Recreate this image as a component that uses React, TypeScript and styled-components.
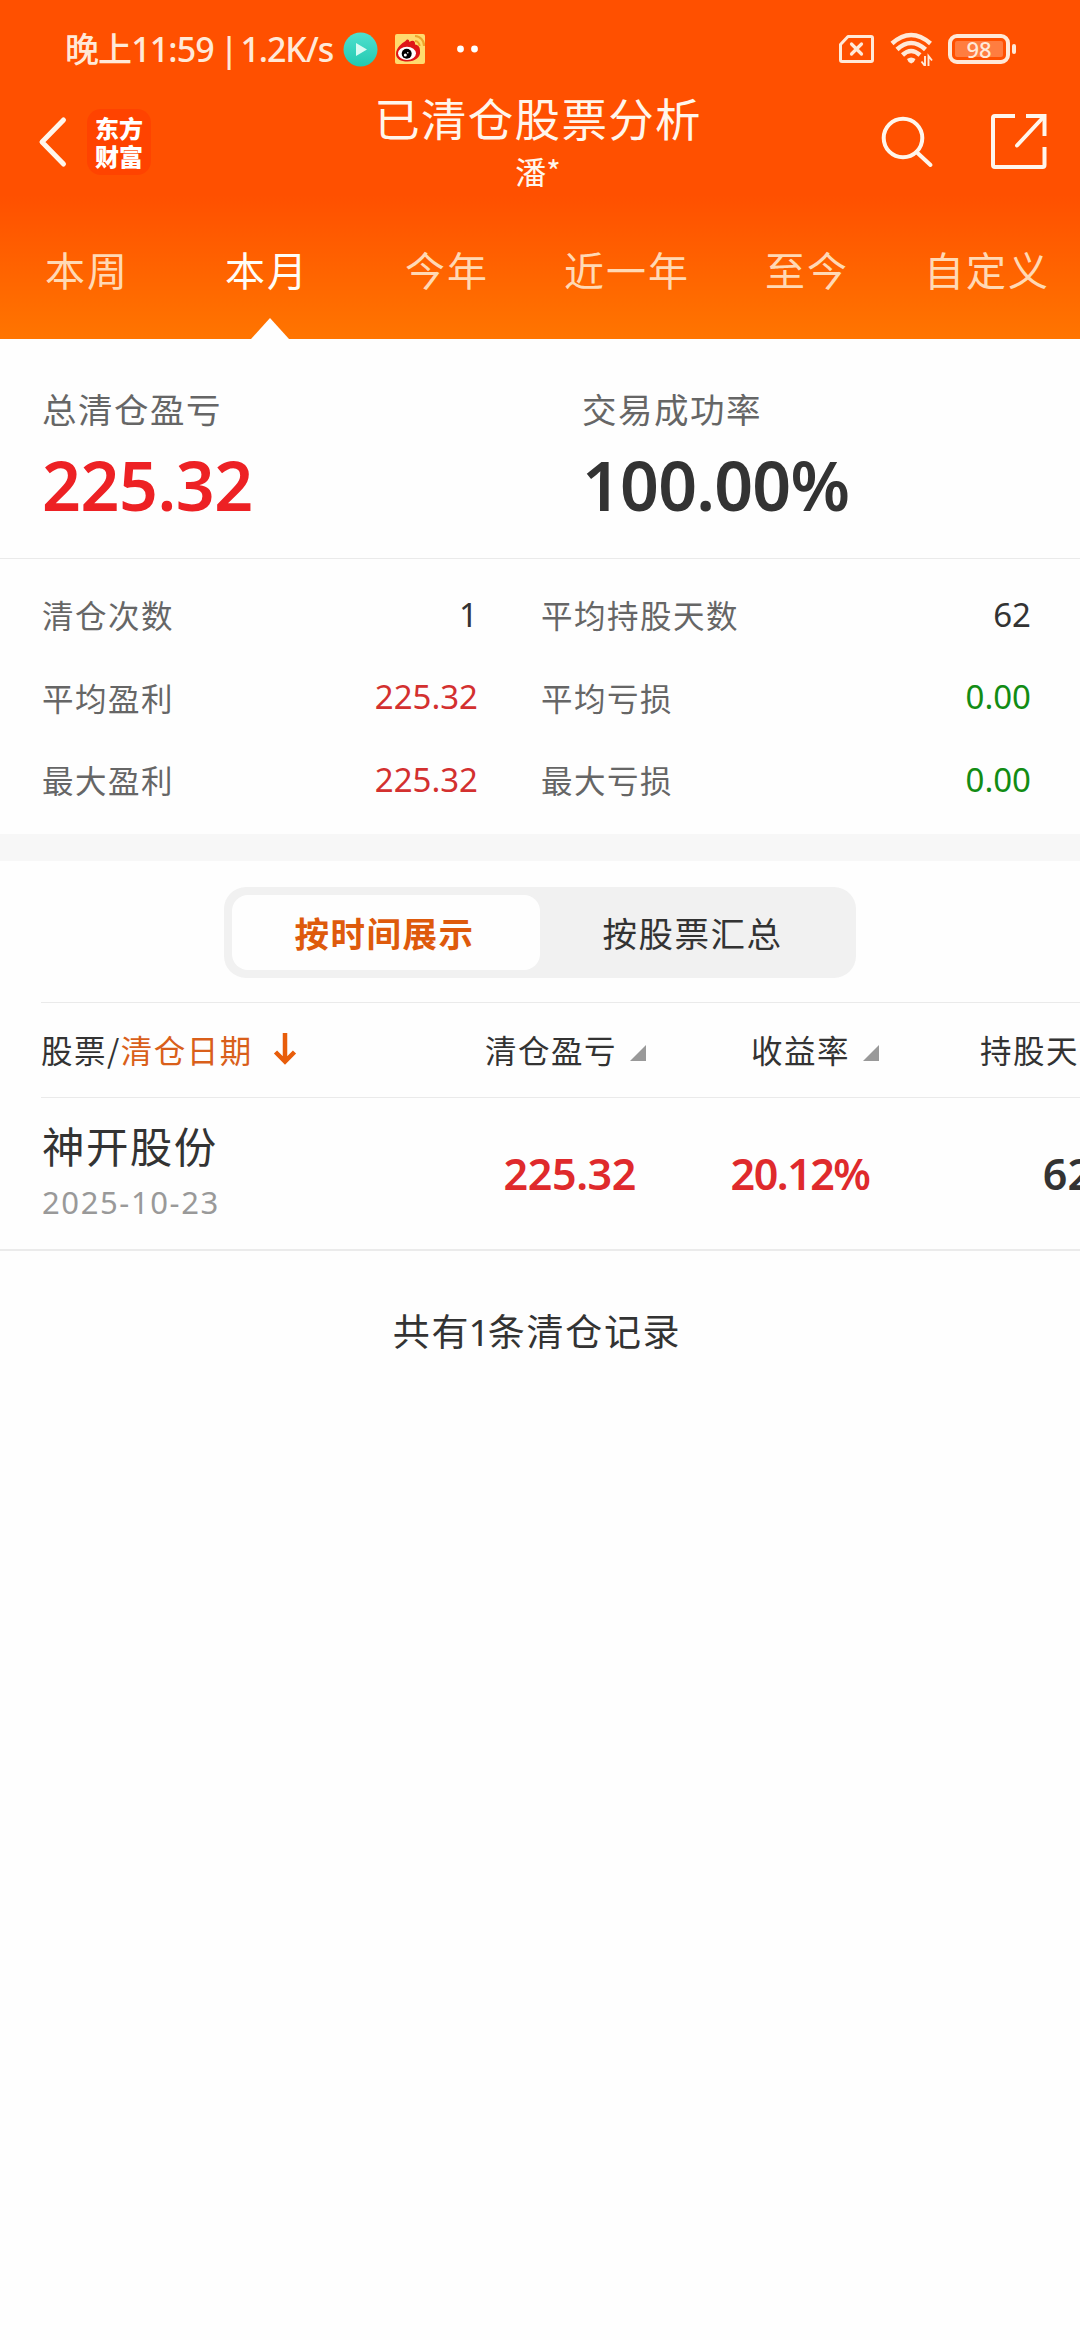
import React from "react";
import styled, { createGlobalStyle } from "styled-components";

const GlobalStyle = createGlobalStyle`
  html, body { margin: 0; padding: 0; background: #fefefe; }
  * { box-sizing: border-box; }
`;

const cjk = `"Noto Sans CJK SC", sans-serif`;
const latin = `"Noto Sans", "Noto Sans CJK SC", sans-serif`;

const Screen = styled.div`
  width: 1080px;
  height: 2340px;
  overflow: hidden;
  background: #fefefe;
  color: #333;
  font-family: ${cjk};
`;

const Header = styled.header`
  height: 339px;
  color: #fff6ec;
  background: linear-gradient(#ff5000 0, #ff5000 195px, #ff7500 339px);
`;

const StatusBar = styled.div`
  height: 88px;
  padding: 10px 64px 0 65px;
  display: flex;
  justify-content: space-between;
  align-items: center;
  color: #ffe9d8;
`;

const StatusGroup = styled.div`
  display: flex;
  align-items: center;
`;

const StatusText = styled.span<{ $gap?: number; $spacing?: number }>`
  font: 500 34px/40px ${latin};
  letter-spacing: ${(p) => p.$spacing ?? 0}px;
  margin-right: ${(p) => p.$gap ?? 0}px;
  white-space: pre;
`;

const StatusIcon = styled.svg<{ $gap?: number }>`
  display: block;
  margin-right: ${(p) => p.$gap ?? 0}px;
`;

const Battery = styled.div`
  width: 62px;
  height: 30px;
  border: 4px solid #ffe9d8;
  border-radius: 9px;
  padding: 3px;
`;

const BatteryLevel = styled.div`
  height: 16px;
  border-radius: 2px;
  background: #ff7d40;
  color: #ffe9d8;
  font: 500 22px/16px ${latin};
  text-align: center;
`;

const BatteryTip = styled.div`
  width: 4px;
  height: 10px;
  margin-left: 2px;
  border-radius: 2px;
  background: #ffe9d8;
`;

const TitleBar = styled.div`
  height: 103px;
  display: grid;
  grid-template-columns: 1fr auto 1fr;
  align-items: center;
`;

const TitleLeft = styled.div`
  display: flex;
  align-items: center;
  padding-left: 37px;
`;

const Logo = styled.div`
  width: 64px;
  height: 66px;
  margin-left: 19px;
  display: flex;
  flex-direction: column;
  align-items: center;
  justify-content: center;
  border-radius: 14px;
  background: #ff4300;
  color: #fff;
`;

const LogoLine = styled.span`
  font: 900 24px/28px ${cjk};
`;

const TitleText = styled.div`
  display: flex;
  flex-direction: column;
  align-items: center;
  padding-right: 4px;
`;

const Title = styled.h1`
  margin: 0;
  font: 400 45.5px/58px ${cjk};
  letter-spacing: 1.3px;
`;

const Subtitle = styled.div`
  font: 400 31px/49px ${cjk};
`;

const TitleRight = styled.div`
  display: flex;
  justify-content: flex-end;
  align-items: center;
  gap: 56px;
  padding-right: 33px;
`;

const Tabs = styled.nav`
  height: 148px;
  display: grid;
  grid-template-columns: repeat(6, 180px);
`;

const Tab = styled.div<{ $active?: boolean }>`
  position: relative;
  padding: 48px 6px 0 0;
  text-align: center;
  font: 400 40px/60px ${cjk};
  letter-spacing: 2px;
  color: ${(p) => (p.$active ? "#fffdf6" : "#ffd9b5")};
`;

const Notch = styled.i`
  position: absolute;
  left: 71px;
  bottom: 0;
  border: 19px solid transparent;
  border-top: 0;
  border-bottom: 21px solid #fefefe;
`;

const Summary = styled.section`
  height: 220px;
  display: grid;
  grid-template-columns: 540px 540px;
  padding: 45px 0 0 42px;
  border-bottom: 1px solid #eaeaea;
`;

const SummaryLabel = styled.div`
  font: 400 34.5px/48px ${cjk};
  letter-spacing: 1.5px;
  color: #666;
`;

const SummaryValue = styled.div<{ $red?: boolean; $spacing?: number }>`
  font: 600 68px/96px ${latin};
  padding-top: 5px;
  letter-spacing: ${(p) => p.$spacing ?? 0}px;
  color: ${(p) => (p.$red ? "#ed2124" : "#333")};
`;

const Stats = styled.section`
  height: 275px;
  padding: 14px 48px 0 42px;
  display: grid;
  grid-template-columns: 436px 490px;
  column-gap: 63px;
  grid-auto-rows: 82.5px;
  align-items: center;
`;

const Stat = styled.div`
  display: flex;
  justify-content: space-between;
  align-items: center;
`;

const StatLabel = styled.span`
  font: 400 31.5px/44px ${cjk};
  letter-spacing: 1.5px;
  color: #666;
`;

const StatValue = styled.span<{ $color?: string }>`
  padding-top: 1px;
  font: 400 33px/44px ${latin};
  color: ${(p) => p.$color ?? "#333"};
`;

const Band = styled.div`
  height: 27px;
  background: #f7f7f7;
`;

const Segment = styled.div`
  width: 632px;
  height: 91px;
  margin: 26px auto 24px;
  padding: 8px;
  display: grid;
  grid-template-columns: 1fr 1fr;
  border-radius: 22px;
  background: #f1f1f1;
`;

const SegmentItem = styled.div<{ $active?: boolean }>`
  padding-right: 3px;
  border-radius: 16px;
  text-align: center;
  font: ${(p) => (p.$active ? 700 : 400)} 34.5px/74px ${cjk};
  letter-spacing: 1.5px;
  color: ${(p) => (p.$active ? "#de5a0c" : "#333")};
  background: ${(p) => (p.$active ? "#fefefe" : "transparent")};
`;

const Table = styled.section`
  border-bottom: 2px solid #ebebeb;
  overflow: hidden;
`;

const HeadRow = styled.div`
  height: 96px;
  margin-left: 41px;
  padding-bottom: 3px;
  display: flex;
  align-items: center;
  border-top: 1px solid #eaeaea;
  border-bottom: 1px solid #eaeaea;
  white-space: nowrap;
  font: 400 31.5px/44px ${cjk};
  letter-spacing: 1.5px;
`;

const HeadCell = styled.div<{ $width: number; $start?: boolean }>`
  flex: none;
  width: ${(p) => p.$width}px;
  display: flex;
  align-items: center;
  justify-content: ${(p) => (p.$start ? "flex-start" : "flex-end")};
`;

const Accent = styled.span`
  color: #d95f1a;
`;

const DownArrow = styled.svg`
  margin: 0 0 0 20px;
`;

const SortMark = styled.i`
  margin: 9px 0 0 13px;
  border-left: 16px solid transparent;
  border-bottom: 16px solid #999;
`;

const DataRow = styled.div`
  height: 151px;
  padding-left: 42px;
  display: flex;
  align-items: center;
`;

const NameCell = styled.div`
  flex: none;
  width: 394px;
`;

const StockName = styled.div`
  font: 400 42.5px/56px ${cjk};
  letter-spacing: 1.4px;
`;

const StockDate = styled.div`
  font: 400 31px/58px ${latin};
  letter-spacing: 1.6px;
  color: #999;
`;

const NumCell = styled.div<{ $width: number; $red?: boolean; $spacing?: number }>`
  flex: none;
  width: ${(p) => p.$width}px;
  text-align: right;
  font: 600 43px/60px ${latin};
  letter-spacing: ${(p) => p.$spacing ?? 0}px;
  color: ${(p) => (p.$red ? "#df2a2c" : "#333")};
`;

const Footer = styled.div`
  padding: 49px 6px 0 0;
  text-align: center;
  font: 400 37px/60px ${cjk};
  letter-spacing: 1.7px;
`;

const Count = styled.span`
  margin: 0 -2px 0 -1.5px;
  font-family: ${latin};
  letter-spacing: 0;
`;

const red = "#d3302f";
const green = "#128c14";

const tabs = ["本周", "本月", "今年", "近一年", "至今", "自定义"];

const stats = [
  { label: "清仓次数", value: "1" },
  { label: "平均持股天数", value: "62" },
  { label: "平均盈利", value: "225.32", color: red },
  { label: "平均亏损", value: "0.00", color: green },
  { label: "最大盈利", value: "225.32", color: red },
  { label: "最大亏损", value: "0.00", color: green },
];

const PlayIcon = () => (
  <StatusIcon $gap={17} width="35" height="35" viewBox="0 0 35 35">
    <defs>
      <linearGradient id="play" x1="0" y1="0" x2="0" y2="1">
        <stop offset="0" stopColor="#4fe0cf" />
        <stop offset="1" stopColor="#22c9b0" />
      </linearGradient>
    </defs>
    <circle cx="17.5" cy="17.5" r="17" fill="url(#play)" />
    <path d="M13 11 L24 17.5 L13 24 Z" fill="#d9fbf3" />
  </StatusIcon>
);

const WeiboIcon = () => (
  <StatusIcon $gap={32} width="30" height="30" viewBox="0 0 30 30">
    <rect width="30" height="30" rx="2" fill="#ffdb6e" />
    <path
      d="M1 20 C1 14 7 9 10.500 7 C11.500 5 14 4.500 14.500 8 C17 6 20.500 6 20 10.500 C23.500 11 25 13 25 17 C26 23 20 27.500 12.500 27.500 C6 27.500 1 25 1 20 Z"
      fill="#df1517"
    />
    <ellipse cx="12" cy="19.300" rx="9" ry="6.600" fill="#fff" />
    <circle cx="11.700" cy="19.800" r="5" fill="#000" />
    <circle cx="10.300" cy="21" r="1.500" fill="#fff" />
    <circle cx="12.800" cy="18.800" r="0.800" fill="#fff" />
    <path d="M20 7 A5 5 0 0 1 24.500 12 M20 2 A9.500 9.500 0 0 1 29 12" fill="none" stroke="#eda52c" strokeWidth="2.200" />
  </StatusIcon>
);

const SimIcon = () => (
  <StatusIcon $gap={15} width="37" height="30" viewBox="0 0 37 30" fill="none" stroke="#ffe9d8" strokeLinejoin="round" strokeLinecap="round">
    <path d="M10 2.500 H33 Q34.500 2.500 34.500 4 V26 Q34.500 27.500 33 27.500 H4 Q2.500 27.500 2.500 26 V10.500 Z" strokeWidth="3" />
    <path d="M13.500 10 L23.500 20 M23.500 10 L13.500 20" strokeWidth="3.200" />
  </StatusIcon>
);

const WifiIcon = () => (
  <StatusIcon $gap={15} width="43" height="34" viewBox="0 0 43 34" fill="none" stroke="#ffe9d8">
    <path d="M2 11.500 Q21 -5.500 40.500 11.500" strokeWidth="4.500" />
    <path d="M7 17.500 Q21 4.500 35.500 17.500" strokeWidth="4.500" />
    <path d="M12.500 23 Q21 15 30 23" strokeWidth="4.500" />
    <path d="M17 27 Q21 24 25.500 27 Q24.500 30.500 21.200 31.500 Q18 30.500 17 27 Z" fill="#ffe9d8" stroke="none" />
    <path d="M35 24 V34 L31.500 29.500 M38.500 34 V24 L42 28.500" strokeWidth="1.900" />
  </StatusIcon>
);

export default function App() {
  return (
    <>
      <GlobalStyle />
      <Screen>
        <Header>
          <StatusBar>
            <StatusGroup>
              <StatusText $gap={6} $spacing={-0.9}>晚上11:59</StatusText>
              <StatusText $gap={2}>|</StatusText>
              <StatusText $gap={10} $spacing={-1.1}>1.2K/s</StatusText>
              <PlayIcon />
              <WeiboIcon />
              <StatusIcon width="22" height="8" viewBox="0 0 22 8" fill="#fff">
                <circle cx="3.500" cy="4" r="3.400" />
                <circle cx="17.500" cy="4" r="3.400" />
              </StatusIcon>
            </StatusGroup>
            <StatusGroup>
              <SimIcon />
              <WifiIcon />
              <Battery>
                <BatteryLevel>98</BatteryLevel>
              </Battery>
              <BatteryTip />
            </StatusGroup>
          </StatusBar>

          <TitleBar>
            <TitleLeft>
              <svg width="31" height="54" viewBox="0 0 31 54" fill="none" stroke="#fff6ec" strokeWidth="5" strokeLinecap="round" strokeLinejoin="round">
                <path d="M26.500 5 L5 27 L26.500 49" />
              </svg>
              <Logo>
                <LogoLine>东方</LogoLine>
                <LogoLine>财富</LogoLine>
              </Logo>
            </TitleLeft>
            <TitleText>
              <Title>已清仓股票分析</Title>
              <Subtitle>潘*</Subtitle>
            </TitleText>
            <TitleRight>
              <svg width="54" height="54" viewBox="0 0 54 54" fill="none" stroke="#fff6ec" strokeWidth="4" strokeLinecap="round">
                <circle cx="23" cy="23" r="19.300" />
                <path d="M36.500 37 L50.500 50" />
              </svg>
              <svg width="57" height="57" viewBox="0 0 57 57" fill="none" stroke="#fff6ec" strokeWidth="4">
                <path d="M25 3 H5 Q3 3 3 5 V52 Q3 54 5 54 H52.500 Q54.500 54 54.500 52 V34" />
                <path d="M36 3 H54.500 V23" />
                <path d="M54 3.500 L27 32.500" strokeLinecap="round" />
              </svg>
            </TitleRight>
          </TitleBar>

          <Tabs>
            {tabs.map((t) => (
              <Tab key={t} $active={t === "本月"}>
                {t}
                {t === "本月" && <Notch />}
              </Tab>
            ))}
          </Tabs>
        </Header>

        <Summary>
          <div>
            <SummaryLabel>总清仓盈亏</SummaryLabel>
            <SummaryValue $red $spacing={-0.4}>225.32</SummaryValue>
          </div>
          <div>
            <SummaryLabel>交易成功率</SummaryLabel>
            <SummaryValue $spacing={-0.8}>100.00%</SummaryValue>
          </div>
        </Summary>

        <Stats>
          {stats.map((s) => (
            <Stat key={s.label}>
              <StatLabel>{s.label}</StatLabel>
              <StatValue $color={s.color}>{s.value}</StatValue>
            </Stat>
          ))}
        </Stats>

        <Band />

        <Segment>
          <SegmentItem $active>按时间展示</SegmentItem>
          <SegmentItem>按股票汇总</SegmentItem>
        </Segment>

        <Table>
          <HeadRow>
            <HeadCell $width={360} $start>
              股票/<Accent>清仓日期</Accent>
              <DownArrow width="24" height="34" viewBox="0 0 24 34" fill="none" stroke="#e85d0a" strokeWidth="4.500">
                <path d="M12 1 V29 M2.500 20 L12 29.500 L21.500 20" />
              </DownArrow>
            </HeadCell>
            <HeadCell $width={245}>
              清仓盈亏
              <SortMark />
            </HeadCell>
            <HeadCell $width={233}>
              收益率
              <SortMark />
            </HeadCell>
            <HeadCell $width={262}>
              持股天数
              <SortMark />
            </HeadCell>
          </HeadRow>
          <DataRow>
            <NameCell>
              <StockName>神开股份</StockName>
              <StockDate>2025-10-23</StockDate>
            </NameCell>
            <NumCell $width={200} $red $spacing={-0.4}>
              225.32
            </NumCell>
            <NumCell $width={233.5} $red $spacing={-1.5}>
              20.12%
            </NumCell>
            <NumCell $width={222.5}>62</NumCell>
          </DataRow>
        </Table>

        <Footer>
          共有<Count>1</Count>条清仓记录
        </Footer>
      </Screen>
    </>
  );
}
